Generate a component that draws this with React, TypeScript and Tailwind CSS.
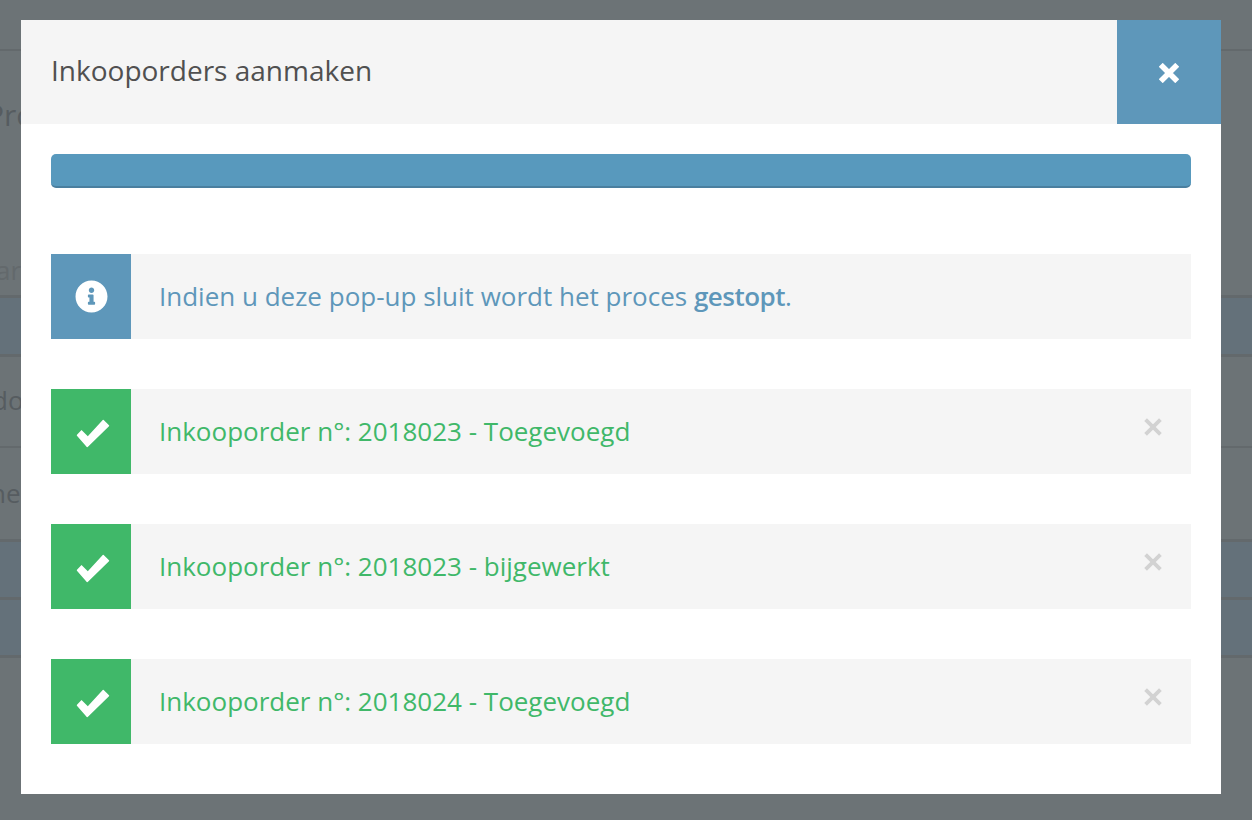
import React from 'react'
import { FaInfoCircle } from 'react-icons/fa'

const orders = [
  'Inkooporder n°: 2018023 - Toegevoegd',
  'Inkooporder n°: 2018023 - bijgewerkt',
  'Inkooporder n°: 2018024 - Toegevoegd',
]

const CloseIcon = ({ className, width }: { className: string; width: number }) => (
  <svg viewBox="0 0 18 18" className={className} stroke="currentColor" strokeWidth={width}>
    <path d="M1.6 1.6 16.4 16.4M16.4 1.6 1.6 16.4" />
  </svg>
)

const BackgroundPage = () => {
  return (
    <div className="h-[820px] bg-[#6c7376] text-[#565c60] text-[26px] overflow-hidden">
      <div className="h-[51px] border-b-2 border-[#63696c]" />
      <div className="h-[244px] pt-[44px]">
        <div className="-ml-[14px] h-[157px] text-[30px] leading-[40px]">Producten</div>
        <div className="-ml-[4px] h-[36px] leading-[36px] text-[#63696c]">ar</div>
      </div>
      <div className="h-[62px] bg-[#64717a] border-y-[3px] border-[#63696c]" />
      <div className="h-[91px] border-b-[2px] border-[#63696c] flex items-center -ml-[8px] pb-[3px]">do</div>
      <div className="h-[94px] border-b-[3px] border-[#63696c] flex items-center -ml-[10px]">ne</div>
      <div className="h-[58px] bg-[#64717a] border-b-[3px] border-[#63696c]" />
      <div className="h-[58px] bg-[#64717a] border-b-[3px] border-[#63696c]" />
    </div>
  )
}

export default function App() {
  return (
    <div className="relative font-['Open_Sans',sans-serif]">
      <BackgroundPage />

      {/* Modal */}
      <div className="absolute left-[21px] top-[20px] w-[1200px] h-[774px] bg-white">
        <div className="flex h-[104px] bg-[#f5f5f5]">
          <h2 className="flex-1 pl-[30px] pt-[29px] text-[28px] leading-[42px] text-[#505050]">Inkooporders aanmaken</h2>
          <div className="w-[104px] bg-[#5e97ba] flex items-center justify-center text-white">
            <CloseIcon width={5} className="w-[20px] h-[20px] translate-y-[1px]" />
          </div>
        </div>

        <div className="px-[30px] pt-[30px]">
          <div className="h-[34px] rounded-[5px] bg-[#5899bd] border-b-2 border-[#4a7f9f]" />

          <div className="mt-[66px] flex h-[85px] bg-[#f5f5f5]">
            <div className="w-[80px] bg-[#5e97ba] flex items-center justify-center text-white text-[33px]">
              <FaInfoCircle />
            </div>
            <p className="pl-[28px] flex items-center text-[26px] text-[#5e97ba]">
              <span>Indien u deze pop-up sluit wordt het proces <b className="font-semibold tracking-[-0.5px]">gestopt</b>.</span>
            </p>
          </div>

          {orders.map((order, i) => (
            <div key={i} className="mt-[50px] flex h-[85px] bg-[#f5f5f5]">
              <div className="w-[80px] bg-[#40b869] flex items-center justify-center text-white">
                <svg viewBox="0 0 33 28" fill="currentColor" className="w-[33px] h-[28px] translate-x-[1.5px] translate-y-[1.5px]">
                  <path d="M0 15.8 5 10.5 11.3 16.8 26.7 0 33 6.2 10.7 28Z" />
                </svg>
              </div>
              <p className="flex-1 pl-[28px] flex items-center text-[26px] text-[#40b869]">{order}</p>
              <div className="pr-[29px] pt-[29px]">
                <CloseIcon width={3.8} className="w-[18px] h-[18px] text-[#d2d2d2]" />
              </div>
            </div>
          ))}
        </div>
      </div>
    </div>
  )
}
